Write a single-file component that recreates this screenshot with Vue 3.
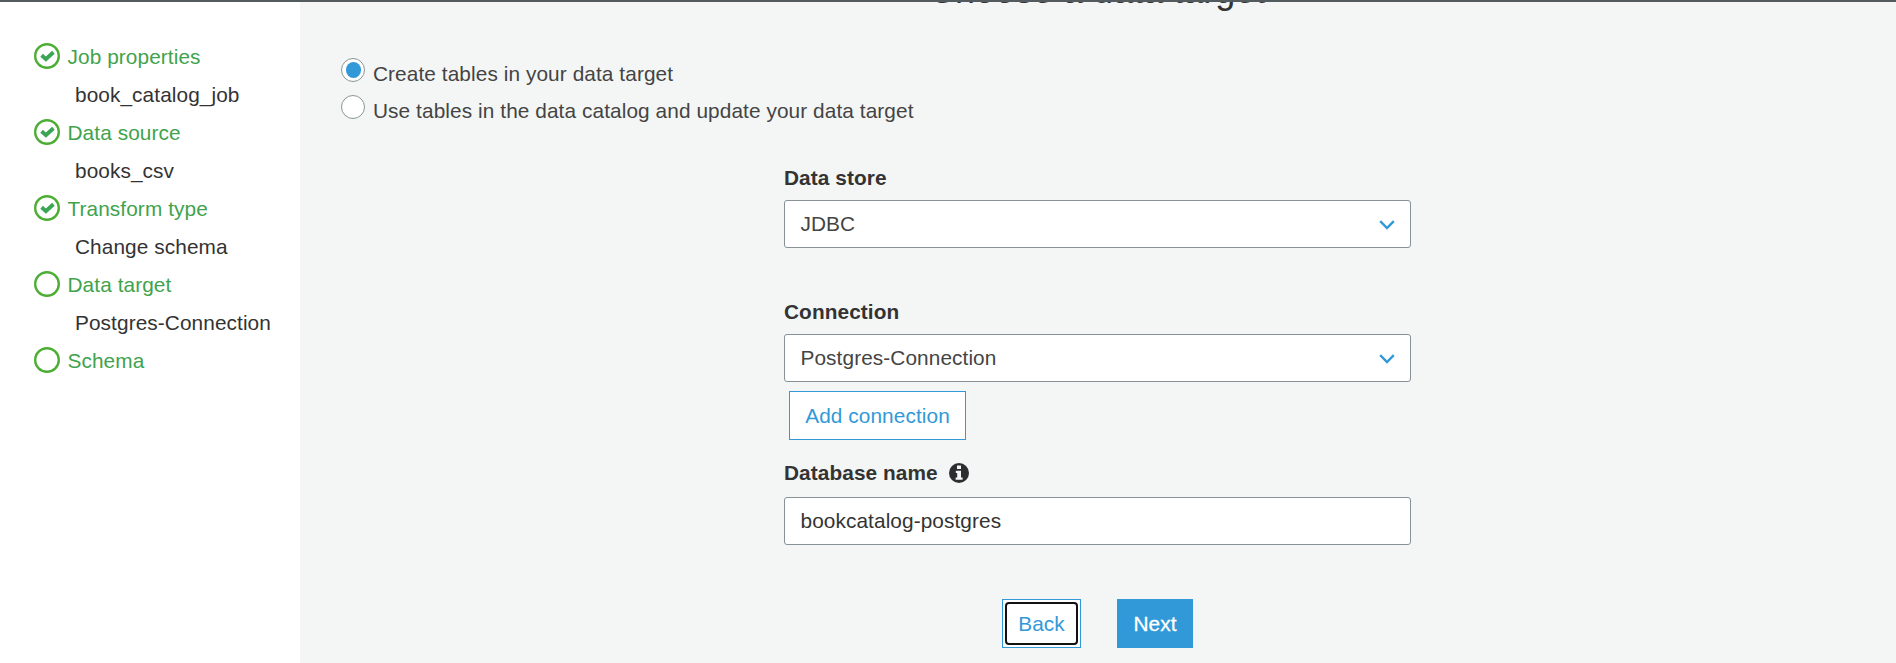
<script setup>
import { ref } from 'vue'

const steps = [
  { title: 'Job properties', detail: 'book_catalog_job', done: true },
  { title: 'Data source', detail: 'books_csv', done: true },
  { title: 'Transform type', detail: 'Change schema', done: true },
  { title: 'Data target', detail: 'Postgres-Connection', done: false },
  { title: 'Schema', detail: '', done: false },
]
const options = [
  'Create tables in your data target',
  'Use tables in the data catalog and update your data target',
]
const selected = ref(0)
</script>

<template>
  <div class="page">
    <aside class="sidebar">
      <template v-for="step in steps" :key="step.title">
        <div class="step">
          <svg class="step-icon" viewBox="0 0 26 26">
            <circle cx="13" cy="13" r="11.8" fill="none" stroke="#4bae33" stroke-width="2.4" />
            <path v-if="step.done" d="M7.6 12.3 L11.9 16.2 L19.4 9.2" fill="none" stroke="#3aa655" stroke-width="3.9" />
          </svg>
          <span>{{ step.title }}</span>
        </div>
        <div v-if="step.detail" class="detail">{{ step.detail }}</div>
      </template>
    </aside>

    <main class="main">
      <h1 class="heading">Choose a data target</h1>
      <div class="options">
        <div v-for="(label, i) in options" :key="label" class="option" @click="selected = i">
          <span class="radio" :class="{ on: selected === i }"></span>
          <span class="option-label">{{ label }}</span>
        </div>
      </div>

      <div class="form">
        <label class="label">Data store</label>
        <div class="field">
          <span>JDBC</span>
          <svg class="chevron" viewBox="0 0 16 10"><path d="M1.2 1.2 L8 8 L14.8 1.2" /></svg>
        </div>
        <label class="label second">Connection</label>
        <div class="field">
          <span>Postgres-Connection</span>
          <svg class="chevron" viewBox="0 0 16 10"><path d="M1.2 1.2 L8 8 L14.8 1.2" /></svg>
        </div>
        <button class="btn add">Add connection</button>
        <label class="label third">
          <span>Database name</span>
          <svg class="info" viewBox="0 0 20 20">
            <circle cx="10" cy="10" r="10" fill="#2b2d2e" />
            <path d="M8 2.5h4v3.4H8z M6.8 7.7H12v6.7h1.6v2.3H6.6v-2.3h1.6V10H6.8z" fill="#f4f6f6" />
          </svg>
        </label>
        <div class="field dark"><span>bookcatalog-postgres</span></div>
        <div class="actions">
          <button class="btn back"><span class="focus">Back</span></button>
          <button class="btn next">Next</button>
        </div>
      </div>
    </main>
  </div>
</template>

<style>
body {
  overflow: hidden;
}
</style>

<style scoped>
.page {
  box-sizing: border-box;
  display: flex;
  width: 1896px;
  height: 663px;
  overflow: hidden;
  border-top: 2px solid #545b5e;
  background: #f4f6f6;
  font-family: "Liberation Sans", Arial, sans-serif;
  font-size: 20.8px;
  letter-spacing: 0.09px;
  color: #444;
}
.sidebar {
  box-sizing: border-box;
  flex: none;
  width: 300px;
  padding: 36px 0 0 33.5px;
  background: #fff;
}
.step {
  display: flex;
  align-items: center;
  gap: 8px;
  height: 38px;
  color: #3fa34d;
}
.step-icon {
  width: 26px;
  height: 26px;
  margin-top: -2px;
}
.detail {
  height: 38px;
  padding-left: 41.5px;
  line-height: 38px;
  color: #333;
  white-space: nowrap;
}
.main {
  flex: 1;
  overflow: hidden;
}
.heading {
  height: 40px;
  margin: -31px 0 0 629px;
  font-size: 36px;
  font-weight: 400;
  letter-spacing: 0;
  line-height: 40px;
  white-space: nowrap;
  color: #333;
}
.options {
  padding: 45px 0 0 41px;
}
.option {
  display: flex;
  gap: 8px;
  height: 37px;
}
.radio {
  box-sizing: border-box;
  display: flex;
  width: 24px;
  height: 24px;
  margin-top: 2px;
  border: 1px solid #879596;
  border-radius: 50%;
  background: #fff;
}
.radio.on::before {
  width: 16px;
  height: 16px;
  margin: 3px 3px 3px 3.5px;
  border-radius: 50%;
  background: #3199d8;
  content: "";
}
.option-label {
  line-height: 35px;
}
.form {
  width: 627px;
  margin-left: 484px;
  padding-top: 34px;
}
.label {
  box-sizing: border-box;
  display: flex;
  align-items: center;
  height: 36px;
  padding-bottom: 8px;
  font-weight: 700;
  color: #333;
}
.second {
  margin-top: 50px;
}
.field {
  box-sizing: border-box;
  display: flex;
  align-items: center;
  justify-content: space-between;
  height: 48px;
  padding: 0 15px 0 15.5px;
  border: 1px solid #879196;
  border-radius: 3px;
  background: #fff;
}
.chevron {
  width: 16px;
  height: 10px;
  margin-top: 1px;
  fill: none;
  stroke: #3199d8;
  stroke-width: 2.4;
}
.btn {
  box-sizing: border-box;
  display: block;
  height: 49px;
  padding: 0;
  border: 1px solid #3199d8;
  background: #fff;
  font: inherit;
  letter-spacing: inherit;
  color: #3199d8;
}
.add {
  width: 177px;
  margin: 9px 0 0 5px;
}
.third {
  height: 42px;
  margin-top: 15px;
  padding-bottom: 7px;
}
.info {
  width: 20px;
  height: 20px;
  margin-left: 11.5px;
}
.dark {
  color: #333;
}
.actions {
  display: flex;
  gap: 36px;
  padding: 54px 0 0 218px;
}
.back {
  display: flex;
  width: 79px;
  padding: 2px;
}
.focus {
  box-sizing: border-box;
  flex: 1;
  height: 43px;
  border: 2px solid #111;
  border-radius: 4px;
  line-height: 40px;
}
.next {
  width: 76px;
  background: #3199d8;
  color: #fff;
  -webkit-text-stroke: 0.3px #fff;
}
</style>
